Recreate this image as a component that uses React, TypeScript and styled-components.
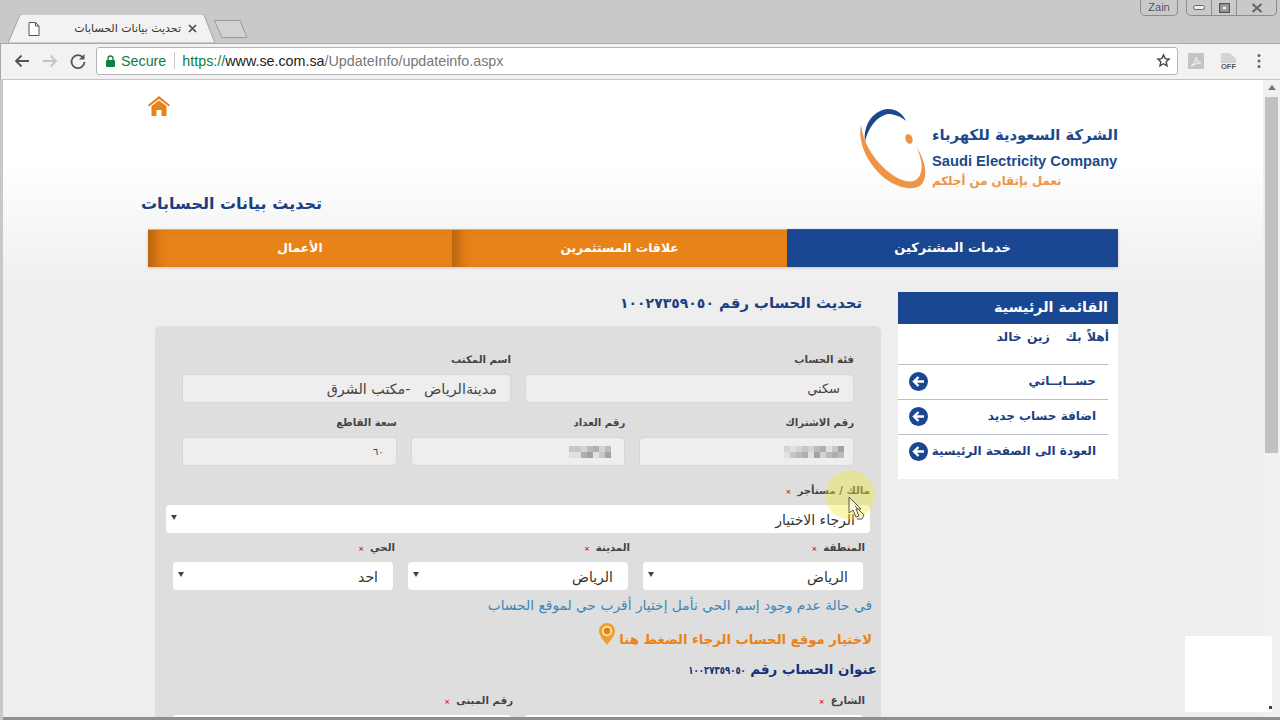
import styled, { createGlobalStyle } from "styled-components";

const ARABIC = `"DejaVu Sans", "Liberation Sans", sans-serif`;
const BLUE = "#1a4791";
const NAVY = "#1b3f80";
const ORANGE = "#e8831a";

const Global = createGlobalStyle`
  html, body { margin: 0; padding: 0; background: #fff; overflow: hidden; }
  * { box-sizing: border-box; }
`;

const Screen = styled.div`
  position: relative;
  width: 1280px;
  height: 720px;
  overflow: hidden;
  display: flex;
  flex-direction: column;
  background: #c8c8c8;
  font-family: ${ARABIC};
`;

/* browser chrome */
const TitleBar = styled.div`
  height: 43px;
  flex: none;
  display: flex;
  align-items: flex-end;
  padding-left: 8px;
  background: #c9c9c9;
`;
const Tab = styled.div`
  position: relative;
  width: 207px;
  height: 29px;
  display: flex;
  align-items: center;
  padding: 0 18px 0 20px;
  gap: 7px;
`;
const TabShape = styled.svg`
  position: absolute;
  left: 0;
  top: 0;
`;
const TabIcon = styled.svg`
  position: relative;
  flex: none;
`;
const TabTitle = styled.span`
  position: relative;
  flex: 1;
  direction: rtl;
  text-align: right;
  font-size: 11px;
  white-space: nowrap;
  color: #333;
`;
const NewTab = styled.svg`
  flex: none;
  margin: 0 0 5px -1px;
`;
const Owner = styled.div`
  align-self: flex-start;
  margin-left: auto;
  width: 38px;
  height: 16px;
  border: 1px solid #8c8c8c;
  border-top: 0;
  border-radius: 0 0 5px 5px;
  font: 11px "Liberation Sans", sans-serif;
  text-align: center;
  line-height: 15px;
  color: #444;
  text-shadow: 0 0 1px #fff;
`;
const WinControls = styled.div`
  align-self: flex-start;
  display: flex;
  margin: 0 3px 0 8px;
  height: 16px;
  border: 1px solid #8c8c8c;
  border-top: 0;
  border-radius: 0 0 5px 5px;
`;
const WinButton = styled.div<{ $w: number }>`
  width: ${(p) => p.$w}px;
  display: flex;
  align-items: center;
  justify-content: center;
  & + & { border-left: 1px solid #8c8c8c; }
`;

const Toolbar = styled.div`
  height: 37px;
  flex: none;
  display: flex;
  align-items: center;
  padding: 0 0 2px 7px;
  background: #f2f2f2;
  border-top: 1px solid #ababab;
  border-bottom: 1px solid #c4c4c4;
  border-left: 1px solid #a9a9a9;
`;
const NavIcon = styled.svg`
  flex: none;
  width: 28px;
  height: 18px;
`;
const UrlBox = styled.div`
  width: 1082px;
  height: 28px;
  margin-left: 4px;
  display: flex;
  align-items: center;
  padding: 0 6px 0 9px;
  background: #fff;
  border: 1px solid #b4b4b4;
  border-radius: 3px;
  font: 14.3px "Liberation Sans", sans-serif;
`;
const Secure = styled.span`
  margin-left: 6px;
  color: #0b8043;
`;
const UrlSep = styled.span`
  width: 1px;
  height: 17px;
  margin: 0 7px 0 8px;
  background: #c8c8c8;
`;
const UrlScheme = styled.span`
  color: #0b8043;
`;
const UrlHost = styled.span`
  color: #222;
`;
const UrlPath = styled.span`
  flex: 1;
  color: #777;
`;
const ExtIcon = styled.svg<{ $ml: number }>`
  flex: none;
  margin-left: ${(p) => p.$ml}px;
`;

/* page */
const Viewport = styled.div`
  flex: 1;
  min-height: 0;
  display: flex;
  margin-left: 3px;
  border-bottom: 3px solid #8f8f8f;
  overflow: hidden;
`;
const Page = styled.div`
  flex: 1;
  background: linear-gradient(#fff 0, #fff 80px, #eeeeee 210px);
`;
const Container = styled.div`
  width: 970px;
  margin: 0 auto;
  direction: rtl;
  display: flex;
  flex-direction: column;
`;
const Scrollbar = styled.div`
  width: 17px;
  flex: none;
  display: flex;
  flex-direction: column;
  align-items: center;
  padding-top: 5px;
  background: #f1f1f1;
`;
const ScrollUp = styled.div`
  width: 0;
  height: 0;
  border: 4px solid transparent;
  border-top: 0;
  border-bottom: 5px solid #777;
`;
const ScrollThumb = styled.div`
  width: 13px;
  height: 356px;
  margin-top: 7px;
  background: #c1c1c1;
`;

const Header = styled.header`
  height: 108px;
  display: flex;
  justify-content: space-between;
  align-items: flex-start;
`;
const Logo = styled.div`
  margin-top: 25px;
  display: flex;
  align-items: flex-start;
`;
const LogoText = styled.div`
  width: 186px;
  display: flex;
  flex-direction: column;
  margin-top: 19px;
`;
const LogoArabic = styled.div`
  font-size: 14.8px;
  font-weight: 700;
  line-height: 22px;
  white-space: nowrap;
  color: #1b4a8a;
`;
const LogoEnglish = styled.div`
  direction: ltr;
  margin-top: 7px;
  font: 700 14.7px/17px "Liberation Sans", sans-serif;
  white-space: nowrap;
  color: #1b4a8a;
`;
const LogoSlogan = styled.div`
  direction: ltr;
  text-align: left;
  margin-top: 2px;
  font-size: 11.8px;
  font-weight: 700;
  line-height: 19px;
  white-space: nowrap;
  color: #ee9445;
`;
const LogoMark = styled.svg`
  flex: none;
  margin-right: 2px;
`;
const HomeIcon = styled.svg`
  margin-top: 16px;
`;

const PageTitle = styled.h1`
  margin: 6px 0 0 -7px;
  align-self: flex-end;
  font-size: 16px;
  font-weight: 700;
  line-height: 20px;
  color: ${NAVY};
`;

const NavBar = styled.nav`
  margin-top: 15px;
  height: 38px;
  display: flex;
  box-shadow: 0 1px 3px rgba(0, 0, 0, 0.18);
`;
const NavItem = styled.div<{ $w: number; $active?: boolean }>`
  width: ${(p) => p.$w}px;
  display: flex;
  align-items: center;
  justify-content: center;
  padding-bottom: 2px;
  font-size: ${(p) => (p.$active ? 13 : 12.3)}px;
  font-weight: 700;
  color: #fff;
  border-top: 1px solid ${(p) => (p.$active ? "#1a5a9c" : "#f0b437")};
  background: ${(p) => (p.$active ? BLUE : ORANGE)};
  box-shadow: ${(p) => (p.$active ? "none" : "inset 14px 0 12px -6px #b9650f")};
`;

const Columns = styled.div`
  margin-top: 25px;
  margin-left: 7px;
  display: flex;
  gap: 17px;
  align-items: flex-start;
`;

const Sidebar = styled.aside`
  width: 220px;
  flex: none;
  height: 187px;
  background: #fff;
`;
const SideHead = styled.div`
  height: 32px;
  padding: 0 10px;
  background: ${BLUE};
  color: #fff;
  font-size: 14.3px;
  font-weight: 700;
  line-height: 31px;
`;
const Welcome = styled.div`
  height: 40px;
  padding: 3px 9px 0 0;
  font-size: 12.3px;
  font-weight: 700;
  line-height: 20px;
  word-spacing: 1px;
  white-space: pre;
  color: ${NAVY};
`;
const SideItem = styled.div<{ $h: number }>`
  height: ${(p) => p.$h}px;
  margin-right: 10px;
  padding: 7px 12px 0 11px;
  display: flex;
  justify-content: space-between;
  border-top: 1px solid #b9c0cc;
  font-size: 12px;
  font-weight: 700;
  line-height: 19px;
  white-space: nowrap;
  color: ${NAVY};
`;
const SideArrow = styled.svg`
  flex: none;
`;

const Main = styled.main`
  width: 726px;
  flex: none;
`;
const FormTitle = styled.h2`
  margin: 0;
  height: 34px;
  padding-right: 19px;
  font-size: 14.8px;
  font-weight: 700;
  line-height: 21px;
  color: ${NAVY};
`;
// the account number sits at the line end, so squeezing from its right edge moves nothing else
const Digits = styled.span<{ $size: number; $squeeze: number }>`
  display: inline-block;
  font-size: ${(p) => p.$size}px;
  transform: scaleX(${(p) => p.$squeeze});
  transform-origin: right center;
`;
const Panel = styled.section`
  height: 420px;
  padding-top: 27px;
  background: #dedede;
  border-radius: 6px 6px 0 0;
`;
const Row = styled.div<{ $cols: number; $top: number; $inset: number; $gap?: number }>`
  display: grid;
  grid-template-columns: repeat(${(p) => p.$cols}, 1fr);
  column-gap: ${(p) => p.$gap ?? 14}px;
  margin-top: ${(p) => p.$top}px;
  padding: 0 ${(p) => p.$inset}px;
`;
const Field = styled.div`
  min-width: 0;
`;
const Label = styled.div`
  height: 21px;
  font-size: 10.2px;
  font-weight: 700;
  line-height: 14px;
  white-space: nowrap;
  color: #444;
`;
const SelectLabel = styled(Label)`
  margin-right: -2px;
`;
const Star = styled.span`
  margin-right: 6px;
  font-size: 7px;
  color: #e02020;
`;
const ReadOnly = styled.div<{ $size?: number; $pad?: number }>`
  height: 29px;
  padding: 0 ${(p) => p.$pad ?? 13}px;
  display: flex;
  align-items: center;
  background: #eeeeee;
  border: 1px solid #d6d6d6;
  border-radius: 4px;
  font-size: ${(p) => p.$size ?? 13}px;
  white-space: pre;
  color: #444;
`;
const Select = styled.div<{ $h: number }>`
  height: ${(p) => p.$h}px;
  padding: 1px 15px 0 5px;
  display: flex;
  justify-content: space-between;
  align-items: center;
  background: #fff;
  border-radius: 4px;
  font-size: 14px;
  color: #333;
`;
const Caret = styled.span`
  width: 0;
  height: 0;
  margin-bottom: 5px;
  border: 3px solid transparent;
  border-bottom: 0;
  border-top: 5px solid #444;
`;
const Hint = styled.div`
  margin-top: 6px;
  padding-right: 9px;
  font-size: 13.8px;
  line-height: 18px;
  white-space: nowrap;
  color: #3d87b8;
`;
const MapLink = styled.div`
  margin-top: 10px;
  padding-right: 9px;
  height: 24px;
  display: flex;
  align-items: flex-end;
  gap: 4px;
  font-size: 13.2px;
  font-weight: 700;
  line-height: 17px;
  white-space: nowrap;
  color: ${ORANGE};
`;
const Pin = styled.svg`
  flex: none;
  margin-bottom: 3px;
`;
const SubTitle = styled.h3`
  margin: 13px 0 0;
  padding-right: 4px;
  font-size: 13.4px;
  font-weight: 700;
  line-height: 18px;
  color: #14307a;
`;
const Mosaic = styled.div`
  display: grid;
  grid-auto-flow: column;
  grid-template-rows: repeat(2, 6px);
  grid-auto-columns: 6px;
`;
const Cell = styled.i<{ $shade: number }>`
  background: rgba(110, 110, 120, ${(p) => p.$shade / 10});
`;

/* things lying on top of the page */
const Spotlight = styled.div`
  position: absolute;
  left: 825px;
  top: 470px;
  width: 50px;
  height: 50px;
  border-radius: 50%;
  background: radial-gradient(circle, rgba(240, 235, 60, 0.42) 0 60%, rgba(240, 235, 60, 0.02) 100%);
  pointer-events: none;
`;
const Cursor = styled.svg`
  position: absolute;
  left: 848px;
  top: 496px;
`;
const Watermark = styled.div`
  position: absolute;
  left: 1185px;
  top: 636px;
  width: 87px;
  height: 76px;
  background: #fff;
`;
const WatermarkDot = styled.span`
  position: absolute;
  right: 0;
  bottom: 3px;
  width: 3px;
  height: 3px;
  background: #444;
`;

const meterShades = [4, 6, 2, 3, 5, 1, 4, 6, 2, 5, 3, 1, 3, 1];
const accountShades = [6, 4, 3, 5, 1, 4, 5, 2, 4, 6, 2, 1, 3, 5, 2, 4, 1, 3, 2, 1];

const Blurred = ({ shades }: { shades: number[] }) => (
  <Mosaic>
    {shades.map((s, i) => (
      <Cell key={i} $shade={s} />
    ))}
  </Mosaic>
);

const ArrowBadge = () => (
  <SideArrow width="19" height="19" viewBox="0 0 19 19">
    <circle cx="9.5" cy="9.5" r="9.5" fill={BLUE} />
    <path d="M15 9.5H5.5M9.5 5 5 9.5l4.5 4.5" fill="none" stroke="#fff" strokeWidth="2.4" />
  </SideArrow>
);

export default function App() {
  return (
    <Screen>
      <Global />
      <TitleBar>
        <Tab>
          <TabShape width="207" height="29" viewBox="0 0 207 29">
            <path d="M0 29 L12 1 Q12.500 0 14 0 H194 Q195.500 0 196 1 L207 29 Z" fill="#f2f2f2" stroke="#a2a2a2" />
          </TabShape>
          <TabIcon width="12" height="14" viewBox="0 0 12 14">
            <path d="M1 .5h6.500L11 4v9.500H1ZM7.500.5V4H11" fill="#fff" stroke="#555" />
          </TabIcon>
          <TabTitle>تحديث بيانات الحسابات</TabTitle>
          <TabIcon width="9" height="9" viewBox="0 0 9 9">
            <path d="M1 1l7 7M8 1 1 8" stroke="#444" strokeWidth="1.500" />
          </TabIcon>
        </Tab>
        <NewTab width="34" height="18" viewBox="0 0 34 18">
          <path d="M.5.500H26L33 17.500H8Z" fill="#d2d2d2" stroke="#9a9a9a" />
        </NewTab>
        <Owner>Zain</Owner>
        <WinControls>
          <WinButton $w={24}>
            <svg width="12" height="5" viewBox="0 0 12 5">
              <rect x=".5" y=".5" width="11" height="4" rx="2" fill="#eee" stroke="#666" />
            </svg>
          </WinButton>
          <WinButton $w={25}>
            <svg width="11" height="10" viewBox="0 0 11 10">
              <rect x=".75" y=".75" width="9.500" height="8.500" fill="none" stroke="#555" strokeWidth="1.500" />
              <rect x="3" y="3" width="5" height="4" fill="#eee" stroke="#666" />
            </svg>
          </WinButton>
          <WinButton $w={40}>
            <svg width="12" height="10" viewBox="0 0 12 10">
              <path d="M1.500 1l9 8M10.500 1l-9 8" stroke="#666" strokeWidth="2.200" />
            </svg>
          </WinButton>
        </WinControls>
      </TitleBar>

      <Toolbar>
        <NavIcon viewBox="0 0 28 18">
          <path d="M21 9H8M13.500 3.500 8 9l5.500 5.500" fill="none" stroke="#555" strokeWidth="1.800" />
        </NavIcon>
        <NavIcon viewBox="0 0 28 18">
          <path d="M7 9h13M14.500 3.500 20 9l-5.500 5.500" fill="none" stroke="#c4c4c4" strokeWidth="1.800" />
        </NavIcon>
        <NavIcon viewBox="0 0 28 18">
          <path d="M19 5.500A6.500 6.500 0 1 0 20.500 10" fill="none" stroke="#555" strokeWidth="1.800" />
          <path d="M20.500 2v5.500H15Z" fill="#555" />
        </NavIcon>
        <UrlBox>
          <svg width="9" height="12" viewBox="0 0 9 12">
            <path d="M2 5V3.500a2.500 2.500 0 0 1 5 0V5" fill="none" stroke="#0b8043" strokeWidth="1.300" />
            <rect y="5" width="9" height="7" rx="1" fill="#0b8043" />
          </svg>
          <Secure>Secure</Secure>
          <UrlSep />
          <UrlScheme>https://</UrlScheme>
          <UrlHost>www.se.com.sa</UrlHost>
          <UrlPath>/UpdateInfo/updateinfo.aspx</UrlPath>
          <svg width="15" height="15" viewBox="0 0 24 24">
            <path d="M12 3l2.700 6 6.300.7-4.700 4.300 1.300 6.500L12 17.200 6.400 20.500 7.700 14 3 9.700 9.300 9Z" fill="none" stroke="#444" strokeWidth="2.200" />
          </svg>
        </UrlBox>
        <ExtIcon $ml={10} width="16" height="16" viewBox="0 0 16 16">
          <rect width="16" height="16" fill="#c4c4c4" />
          <path d="M3 13c3-2 5-6 5-9 0 3 2 5 5 6-3 0-6 1-10 3Z" fill="none" stroke="#eee" strokeWidth="1.200" />
        </ExtIcon>
        <ExtIcon $ml={17} width="15" height="16" viewBox="0 0 15 16">
          <path d="M0 0h9l6 6v4H0Z" fill="#d4d4d4" />
          <text x="0" y="15.500" fontFamily="Liberation Sans" fontWeight="700" fontSize="7.500" fill="#555">OFF</text>
        </ExtIcon>
        <ExtIcon $ml={21} width="4" height="16" viewBox="0 0 4 16">
          <circle cx="2" cy="2.500" r="1.500" fill="#666" />
          <circle cx="2" cy="8" r="1.500" fill="#666" />
          <circle cx="2" cy="13.500" r="1.500" fill="#666" />
        </ExtIcon>
      </Toolbar>

      <Viewport>
        <Page>
          <Container>
            <Header>
              <Logo>
                <LogoText>
                  <LogoArabic>الشركة السعودية للكهرباء</LogoArabic>
                  <LogoEnglish>Saudi Electricity Company</LogoEnglish>
                  <LogoSlogan>نعمل بإتقان من أجلكم</LogoSlogan>
                </LogoText>
                <LogoMark width="75" height="85" viewBox="0 0 75 85">
                  <path d="M10 37C8 20 18 5 33 4 42 4 48 9 51 16 45 11 39 9 33 9 22 11 13 23 10 37Z" fill="#1b4a8a" />
                  <path d="M6 20C2 38 14 62 32 75 44 83 58 86 66 80 72 74 73 60 61 41 68 55 69 69 61 75 52 80 38 72 28 62 16 50 8 36 6 20Z" fill="#ee9445" />
                  <ellipse cx="54" cy="34" rx="3.500" ry="5" transform="rotate(-20 54 34)" fill="#ee9445" />
                </LogoMark>
              </Logo>
              <HomeIcon width="22" height="20" viewBox="0 0 22 20">
                <path d="M11 0 22 9l-1 1.500L11 3 1 10.500 0 9Z" fill={ORANGE} />
                <path d="M3.500 10 11 4.500 18.500 10v10h-5v-6h-5v6h-5Z" fill={ORANGE} />
              </HomeIcon>
            </Header>

            <PageTitle>تحديث بيانات الحسابات</PageTitle>

            <NavBar>
              <NavItem $w={331} $active>خدمات المشتركين</NavItem>
              <NavItem $w={335}>علاقات المستثمرين</NavItem>
              <NavItem $w={304}>الأعمال</NavItem>
            </NavBar>

            <Columns>
              <Sidebar>
                <SideHead>القائمة الرئيسية</SideHead>
                <Welcome>أهلاً بك   زين خالد</Welcome>
                <SideItem $h={35}>حســابــاتي<ArrowBadge /></SideItem>
                <SideItem $h={35}>اضافة حساب جديد<ArrowBadge /></SideItem>
                <SideItem $h={45}>العودة الى الصفحة الرئيسية<ArrowBadge /></SideItem>
              </Sidebar>

              <Main>
                <FormTitle>
                  تحديث الحساب رقم <Digits $size={14} $squeeze={1}>١٠٠٢٧٣٥٩٠٥٠</Digits>
                </FormTitle>
                <Panel>
                  <Row $cols={2} $top={0} $inset={27}>
                    <Field>
                      <Label>فئة الحساب</Label>
                      <ReadOnly>سكني</ReadOnly>
                    </Field>
                    <Field>
                      <Label>اسم المكتب</Label>
                      <ReadOnly $size={14.3}>مدينةالرياض   -مكتب الشرق</ReadOnly>
                    </Field>
                  </Row>
                  <Row $cols={3} $top={13} $inset={27}>
                    <Field>
                      <Label>رقم الاشتراك</Label>
                      <ReadOnly $pad={9}><Blurred shades={accountShades} /></ReadOnly>
                    </Field>
                    <Field>
                      <Label>رقم العداد</Label>
                      <ReadOnly><Blurred shades={meterShades} /></ReadOnly>
                    </Field>
                    <Field>
                      <Label>سعة القاطع</Label>
                      <ReadOnly $size={10} $pad={12}>٦٠</ReadOnly>
                    </Field>
                  </Row>
                  <Row $cols={1} $top={18} $inset={11}>
                    <Field>
                      <Label>مالك / مستأجر<Star>×</Star></Label>
                      <Select $h={28}>الرجاء الاختيار<Caret /></Select>
                    </Field>
                  </Row>
                  <Row $cols={3} $top={8} $inset={18} $gap={15}>
                    <Field>
                      <SelectLabel>المنطقة<Star>×</Star></SelectLabel>
                      <Select $h={28}>الرياض<Caret /></Select>
                    </Field>
                    <Field>
                      <SelectLabel>المدينة<Star>×</Star></SelectLabel>
                      <Select $h={28}>الرياض<Caret /></Select>
                    </Field>
                    <Field>
                      <SelectLabel>الحي<Star>×</Star></SelectLabel>
                      <Select $h={28}>احد<Caret /></Select>
                    </Field>
                  </Row>
                  <Hint>في حالة عدم وجود إسم الحي نأمل إختيار أقرب حي لموقع الحساب</Hint>
                  <MapLink>
                    لاختيار موقع الحساب الرجاء الضغط هنا
                    <Pin width="16" height="22" viewBox="0 0 16 22">
                      <path d="M8 0a8 8 0 0 1 8 8c0 5-5 10-8 14C5 18 0 13 0 8a8 8 0 0 1 8-8Z" fill="#eea12a" />
                      <circle cx="8" cy="8" r="5" fill="#fff3d8" />
                      <circle cx="8" cy="8" r="3.500" fill={ORANGE} />
                    </Pin>
                  </MapLink>
                  <SubTitle>
                    عنوان الحساب رقم <Digits $size={11} $squeeze={0.78}>١٠٠٢٧٣٥٩٠٥٠</Digits>
                  </SubTitle>
                  <Row $cols={2} $top={14} $inset={18}>
                    <Field>
                      <SelectLabel>الشارع<Star>×</Star></SelectLabel>
                      <Select $h={28} />
                    </Field>
                    <Field>
                      <SelectLabel>رقم المبنى<Star>×</Star></SelectLabel>
                      <Select $h={28} />
                    </Field>
                  </Row>
                </Panel>
              </Main>
            </Columns>
          </Container>
        </Page>
        <Scrollbar>
          <ScrollUp />
          <ScrollThumb />
        </Scrollbar>
      </Viewport>

      <Spotlight />
      <Cursor width="17" height="24" viewBox="0 0 17 24">
        <path d="M1 1v16l4-3 3 7 3-1-3-7h5Z" fill="rgba(255,255,255,.5)" stroke="#555" strokeWidth="1" />
        <path d="M7 10l9 9-2 4H9" fill="none" stroke="#555" strokeWidth="1" />
      </Cursor>
      <Watermark>
        <WatermarkDot />
      </Watermark>
    </Screen>
  );
}
